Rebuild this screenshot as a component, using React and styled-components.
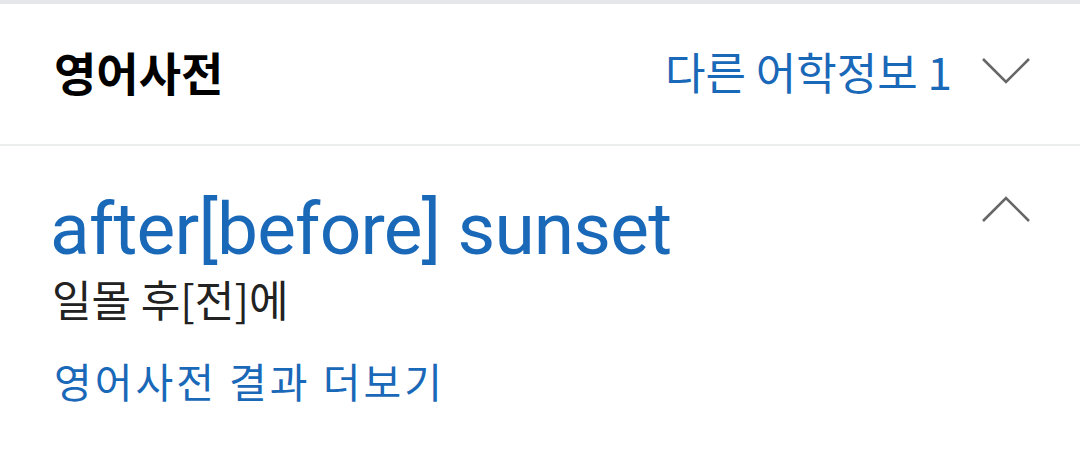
import styled, { createGlobalStyle } from "styled-components"

const GlobalStyle = createGlobalStyle`
  html, body {
    margin: 0;
    padding: 0;
    background: #fff;
  }
  body {
    font-family: Roboto, "Noto Sans CJK KR", sans-serif;
  }
`

const Page = styled.div`
  width: 1080px;
  height: 456px;
  overflow: hidden;
  background: #fff;
  border-top: 4px solid #e5e7ea;
  box-sizing: border-box;
`

const Header = styled.div`
  height: 142px;
  box-sizing: border-box;
  display: flex;
  align-items: center;
  justify-content: space-between;
  padding: 0 50px 6px 54px;
  border-bottom: 2px solid #eceeed;
`

const Title = styled.h2`
  margin: 0;
  font-family: "Noto Sans CJK KR", sans-serif;
  font-weight: 700;
  font-size: 46px;
  line-height: 56px;
  color: #000;
`

const More = styled.div`
  display: flex;
  align-items: center;
  gap: 30px;
  font-family: "Noto Sans CJK KR", sans-serif;
  font-size: 44px;
  line-height: 56px;
  color: #1a68b8;
`

const Body = styled.div`
  padding: 40px 50px 0 50px;
  display: flex;
  justify-content: space-between;
  align-items: flex-start;
`

const Entry = styled.div`
  display: flex;
  flex-direction: column;
`

const Word = styled.div`
  font-family: Roboto, sans-serif;
  font-size: 73px;
  line-height: 86px;
  color: #1a68b8;
  letter-spacing: -0.8px;
`

const Meaning = styled.div`
  font-family: "Noto Sans CJK KR", sans-serif;
  font-size: 43px;
  line-height: 52px;
  color: #222;
  padding-left: 2px;
`

const MoreLink = styled.div`
  margin-top: 32px;
  font-family: "Noto Sans CJK KR", sans-serif;
  font-size: 41px;
  line-height: 48px;
  color: #1a68b8;
  padding-left: 4px;
  letter-spacing: 3px;
`

const Chevron = ({ up }) => (
  <svg width="48" height="26" viewBox="0 0 48 26" style={{ display: "block", flexShrink: 0 }}>
    <polyline
      points={up ? "1,25 24,2 47,25" : "1,1 24,24 47,1"}
      fill="none"
      stroke="#666"
      strokeWidth="2.6"
    />
  </svg>
)

const Toggle = styled.div`
  margin-top: 10px;
`

export default function App() {
  return (
    <Page>
      <GlobalStyle />
      <Header>
        <Title>영어사전</Title>
        <More>
          <span>다른 어학정보 1</span>
          <Chevron />
        </More>
      </Header>
      <Body>
        <Entry>
          <Word>after[before] sunset</Word>
          <Meaning>일몰 후[전]에</Meaning>
          <MoreLink>영어사전 결과 더보기</MoreLink>
        </Entry>
        <Toggle>
          <Chevron up />
        </Toggle>
      </Body>
    </Page>
  )
}
